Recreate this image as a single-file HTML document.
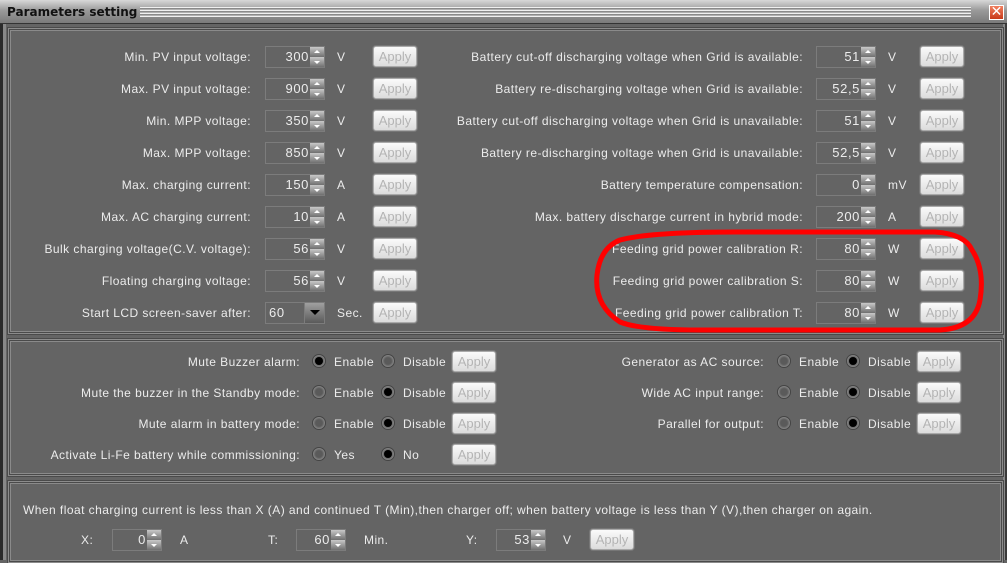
<!DOCTYPE html>
<html><head><meta charset="utf-8"><style>
*{margin:0;padding:0;box-sizing:border-box}
body{width:1007px;height:560px;overflow:hidden;background:#646464;font-family:"Liberation Sans","DejaVu Sans",sans-serif;font-size:12px;letter-spacing:0.45px;color:#ececec;position:relative}
.a{position:absolute;white-space:nowrap;line-height:14px}
.r{text-align:right}
.title{position:absolute;left:0;top:0;width:1007px;height:24px;background:linear-gradient(#d8d8d8,#9a9a9a 45%,#7a7a7a);border-bottom:1px solid #333}
.title .lines{position:absolute;left:140px;right:36px;top:7px;height:10px;background:repeating-linear-gradient(#f0f0f0 0 1px,#8a8a8a 1px 2px,#b0b0b0 2px 3px)}
.title b{position:absolute;left:7px;top:5px;font-size:12px;color:#111;font-family:"DejaVu Sans",sans-serif;letter-spacing:0;z-index:2}
.close{position:absolute;left:989px;top:5px;width:15px;height:15px;background:linear-gradient(#f08060,#c83a1a);border:1px solid #fff;color:#fff;font:bold 14px/13px "DejaVu Sans",sans-serif;text-align:center;letter-spacing:0}
.frame{position:absolute;left:0;top:24px;width:1007px;height:536px;border-left:3px solid #2a2a2a;border-right:2px solid #3a3a3a;}
.frame2{position:absolute;left:3px;top:24px;width:1002px;height:536px;border-left:3px solid #888;border-right:2px solid #888}
.panel{position:absolute;border:1px solid #8c8c8c;box-shadow:inset 0 0 0 1px #4a4a4a,inset 0 0 0 2px #8a8a8a,0 0 0 1px #4a4a4a}
.sp{position:absolute;height:22px;border:1px solid #7c7c7c;background:#646464}
.sp span{position:absolute;right:15px;top:3px;line-height:14px;font-size:13px;letter-spacing:0.6px}
.sp i{position:absolute;right:0;width:14px;height:10px;background:linear-gradient(#c8c8c8,#707070);}
.sp i.u{top:0}.sp i.d{bottom:0}
.sp i:after{content:"";position:absolute;left:4px;border-left:3px solid transparent;border-right:3px solid transparent}
.sp i.u:after{top:3px;border-bottom:3px solid #fff}
.sp i.d:after{top:4px;border-top:3px solid #fff}
.btn{position:absolute;width:44px;height:21px;border:1px solid #aaa;border-radius:3px;background:linear-gradient(#fafafa,#dcdcdc);color:#b4b4b4;font-size:13px;letter-spacing:0;text-align:center;line-height:19px;box-shadow:0 0 0 1px #777}
.rd{position:absolute;width:14px;height:14px;border-radius:50%;background:radial-gradient(#5a5a5a 40%,#888 70%,#b0b0b0);border:1px solid #444}
.rd.on:after{content:"";position:absolute;left:2px;top:2px;width:8px;height:8px;border-radius:50%;background:#000}
</style></head><body>
<div class="title"><b>Parameters setting</b><div class="lines"></div><div class="close">✕</div></div>
<div class="frame"></div><div class="frame2"></div>
<div class="panel" style="left:8px;top:28px;width:995px;height:306px"></div>
<div class="panel" style="left:8px;top:339px;width:995px;height:137px"></div>
<div class="panel" style="left:8px;top:481px;width:995px;height:82px"></div>

<div class="a r" style="right:756px;top:50px">Min. PV input voltage:</div>
<div class="a r" style="right:756px;top:82px">Max. PV input voltage:</div>
<div class="a r" style="right:756px;top:114px">Min. MPP voltage:</div>
<div class="a r" style="right:756px;top:146px">Max. MPP voltage:</div>
<div class="a r" style="right:756px;top:178px">Max. charging current:</div>
<div class="a r" style="right:756px;top:210px">Max. AC charging current:</div>
<div class="a r" style="right:756px;top:242px">Bulk charging voltage(C.V. voltage):</div>
<div class="a r" style="right:756px;top:274px">Floating charging voltage:</div>
<div class="a r" style="right:756px;top:306px">Start LCD screen-saver after:</div>

<div class="sp" style="left:265px;top:46px;width:60px"><span>300</span><i class="u"></i><i class="d"></i></div>
<div class="sp" style="left:265px;top:78px;width:60px"><span>900</span><i class="u"></i><i class="d"></i></div>
<div class="sp" style="left:265px;top:110px;width:60px"><span>350</span><i class="u"></i><i class="d"></i></div>
<div class="sp" style="left:265px;top:142px;width:60px"><span>850</span><i class="u"></i><i class="d"></i></div>
<div class="sp" style="left:265px;top:174px;width:60px"><span>150</span><i class="u"></i><i class="d"></i></div>
<div class="sp" style="left:265px;top:206px;width:60px"><span>10</span><i class="u"></i><i class="d"></i></div>
<div class="sp" style="left:265px;top:238px;width:60px"><span>56</span><i class="u"></i><i class="d"></i></div>
<div class="sp" style="left:265px;top:270px;width:60px"><span>56</span><i class="u"></i><i class="d"></i></div>
<div class="sp" style="left:265px;top:302px;width:60px"><span style="left:3px;right:auto">60</span><div style="position:absolute;right:0;top:0;width:20px;height:20px;border-left:1px solid #7c7c7c;background:linear-gradient(#a0a0a0,#5a5a5a)"><div style="position:absolute;left:5px;top:7px;border-left:5px solid transparent;border-right:5px solid transparent;border-top:5px solid #000"></div></div></div>

<div class="a" style="left:337px;top:50px">V</div>
<div class="a" style="left:337px;top:82px">V</div>
<div class="a" style="left:337px;top:114px">V</div>
<div class="a" style="left:337px;top:146px">V</div>
<div class="a" style="left:337px;top:178px">A</div>
<div class="a" style="left:337px;top:210px">A</div>
<div class="a" style="left:337px;top:242px">V</div>
<div class="a" style="left:337px;top:274px">V</div>
<div class="a" style="left:337px;top:306px">Sec.</div>

<div class="btn" style="left:373px;top:46px">Apply</div>
<div class="btn" style="left:373px;top:78px">Apply</div>
<div class="btn" style="left:373px;top:110px">Apply</div>
<div class="btn" style="left:373px;top:142px">Apply</div>
<div class="btn" style="left:373px;top:174px">Apply</div>
<div class="btn" style="left:373px;top:206px">Apply</div>
<div class="btn" style="left:373px;top:238px">Apply</div>
<div class="btn" style="left:373px;top:270px">Apply</div>
<div class="btn" style="left:373px;top:302px">Apply</div>

<div class="a r" style="right:204px;top:50px">Battery cut-off discharging voltage when Grid is available:</div>
<div class="a r" style="right:204px;top:82px">Battery re-discharging voltage when Grid is available:</div>
<div class="a r" style="right:204px;top:114px">Battery cut-off discharging voltage when Grid is unavailable:</div>
<div class="a r" style="right:204px;top:146px">Battery re-discharging voltage when Grid is unavailable:</div>
<div class="a r" style="right:204px;top:178px">Battery temperature compensation:</div>
<div class="a r" style="right:204px;top:210px">Max. battery discharge current in hybrid mode:</div>
<div class="a r" style="right:204px;top:242px">Feeding grid power calibration R:</div>
<div class="a r" style="right:204px;top:274px">Feeding grid power calibration S:</div>
<div class="a r" style="right:204px;top:306px">Feeding grid power calibration T:</div>

<div class="sp" style="left:816px;top:46px;width:60px"><span>51</span><i class="u"></i><i class="d"></i></div>
<div class="sp" style="left:816px;top:78px;width:60px"><span>52,5</span><i class="u"></i><i class="d"></i></div>
<div class="sp" style="left:816px;top:110px;width:60px"><span>51</span><i class="u"></i><i class="d"></i></div>
<div class="sp" style="left:816px;top:142px;width:60px"><span>52,5</span><i class="u"></i><i class="d"></i></div>
<div class="sp" style="left:816px;top:174px;width:60px"><span>0</span><i class="u"></i><i class="d"></i></div>
<div class="sp" style="left:816px;top:206px;width:60px"><span>200</span><i class="u"></i><i class="d"></i></div>
<div class="sp" style="left:816px;top:238px;width:60px"><span>80</span><i class="u"></i><i class="d"></i></div>
<div class="sp" style="left:816px;top:270px;width:60px"><span>80</span><i class="u"></i><i class="d"></i></div>
<div class="sp" style="left:816px;top:302px;width:60px"><span>80</span><i class="u"></i><i class="d"></i></div>

<div class="a" style="left:888px;top:50px">V</div>
<div class="a" style="left:888px;top:82px">V</div>
<div class="a" style="left:888px;top:114px">V</div>
<div class="a" style="left:888px;top:146px">V</div>
<div class="a" style="left:888px;top:178px">mV</div>
<div class="a" style="left:888px;top:210px">A</div>
<div class="a" style="left:888px;top:242px">W</div>
<div class="a" style="left:888px;top:274px">W</div>
<div class="a" style="left:888px;top:306px">W</div>

<div class="btn" style="left:920px;top:46px">Apply</div>
<div class="btn" style="left:920px;top:78px">Apply</div>
<div class="btn" style="left:920px;top:110px">Apply</div>
<div class="btn" style="left:920px;top:142px">Apply</div>
<div class="btn" style="left:920px;top:174px">Apply</div>
<div class="btn" style="left:920px;top:206px">Apply</div>
<div class="btn" style="left:920px;top:238px">Apply</div>
<div class="btn" style="left:920px;top:270px">Apply</div>
<div class="btn" style="left:920px;top:302px">Apply</div>

<div class="a r" style="right:707px;top:355px">Mute Buzzer alarm:</div>
<div class="a r" style="right:707px;top:386px">Mute the buzzer in the Standby mode:</div>
<div class="a r" style="right:707px;top:417px">Mute alarm in battery mode:</div>
<div class="a r" style="right:707px;top:448px">Activate Li-Fe battery while commissioning:</div>
<div class="rd on" style="left:312px;top:354px"></div><div class="a" style="left:334px;top:355px">Enable</div>
<div class="rd" style="left:381px;top:354px"></div><div class="a" style="left:403px;top:355px">Disable</div>
<div class="rd" style="left:312px;top:385px"></div><div class="a" style="left:334px;top:386px">Enable</div>
<div class="rd on" style="left:381px;top:385px"></div><div class="a" style="left:403px;top:386px">Disable</div>
<div class="rd" style="left:312px;top:416px"></div><div class="a" style="left:334px;top:417px">Enable</div>
<div class="rd on" style="left:381px;top:416px"></div><div class="a" style="left:403px;top:417px">Disable</div>
<div class="rd" style="left:312px;top:447px"></div><div class="a" style="left:334px;top:448px">Yes</div>
<div class="rd on" style="left:381px;top:447px"></div><div class="a" style="left:403px;top:448px">No</div>
<div class="btn" style="left:452px;top:351px">Apply</div>
<div class="btn" style="left:452px;top:382px">Apply</div>
<div class="btn" style="left:452px;top:413px">Apply</div>
<div class="btn" style="left:452px;top:444px">Apply</div>

<div class="a r" style="right:243px;top:355px">Generator as AC source:</div>
<div class="a r" style="right:243px;top:386px">Wide AC input range:</div>
<div class="a r" style="right:243px;top:417px">Parallel for output:</div>
<div class="rd" style="left:777px;top:354px"></div><div class="a" style="left:799px;top:355px">Enable</div>
<div class="rd on" style="left:846px;top:354px"></div><div class="a" style="left:868px;top:355px">Disable</div>
<div class="rd" style="left:777px;top:385px"></div><div class="a" style="left:799px;top:386px">Enable</div>
<div class="rd on" style="left:846px;top:385px"></div><div class="a" style="left:868px;top:386px">Disable</div>
<div class="rd" style="left:777px;top:416px"></div><div class="a" style="left:799px;top:417px">Enable</div>
<div class="rd on" style="left:846px;top:416px"></div><div class="a" style="left:868px;top:417px">Disable</div>
<div class="btn" style="left:917px;top:351px">Apply</div>
<div class="btn" style="left:917px;top:382px">Apply</div>
<div class="btn" style="left:917px;top:413px">Apply</div>

<div class="a" style="left:23px;top:503px">When float charging current is less than X (A) and continued T (Min),then charger off; when battery voltage is less than Y (V),then charger on again.</div>
<div class="a" style="left:81px;top:533px">X:</div>
<div class="sp" style="left:112px;top:529px;width:50px"><span>0</span><i class="u"></i><i class="d"></i></div>
<div class="a" style="left:180px;top:533px">A</div>
<div class="a" style="left:268px;top:533px">T:</div>
<div class="sp" style="left:296px;top:529px;width:50px"><span>60</span><i class="u"></i><i class="d"></i></div>
<div class="a" style="left:364px;top:533px">Min.</div>
<div class="a" style="left:466px;top:533px">Y:</div>
<div class="sp" style="left:496px;top:529px;width:50px"><span>53</span><i class="u"></i><i class="d"></i></div>
<div class="a" style="left:563px;top:533px">V</div>
<div class="btn" style="left:590px;top:529px">Apply</div>

<svg style="position:absolute;left:0;top:0" width="1007" height="560"><path d="M735 232 Q650 232 620 240 Q600 248 597 275 Q594 305 620 322 Q640 330 700 330 L940 330 Q975 328 980 300 Q985 270 972 250 Q965 234 935 232 Z" fill="none" stroke="#f00" stroke-width="5"/></svg>
</body></html>
